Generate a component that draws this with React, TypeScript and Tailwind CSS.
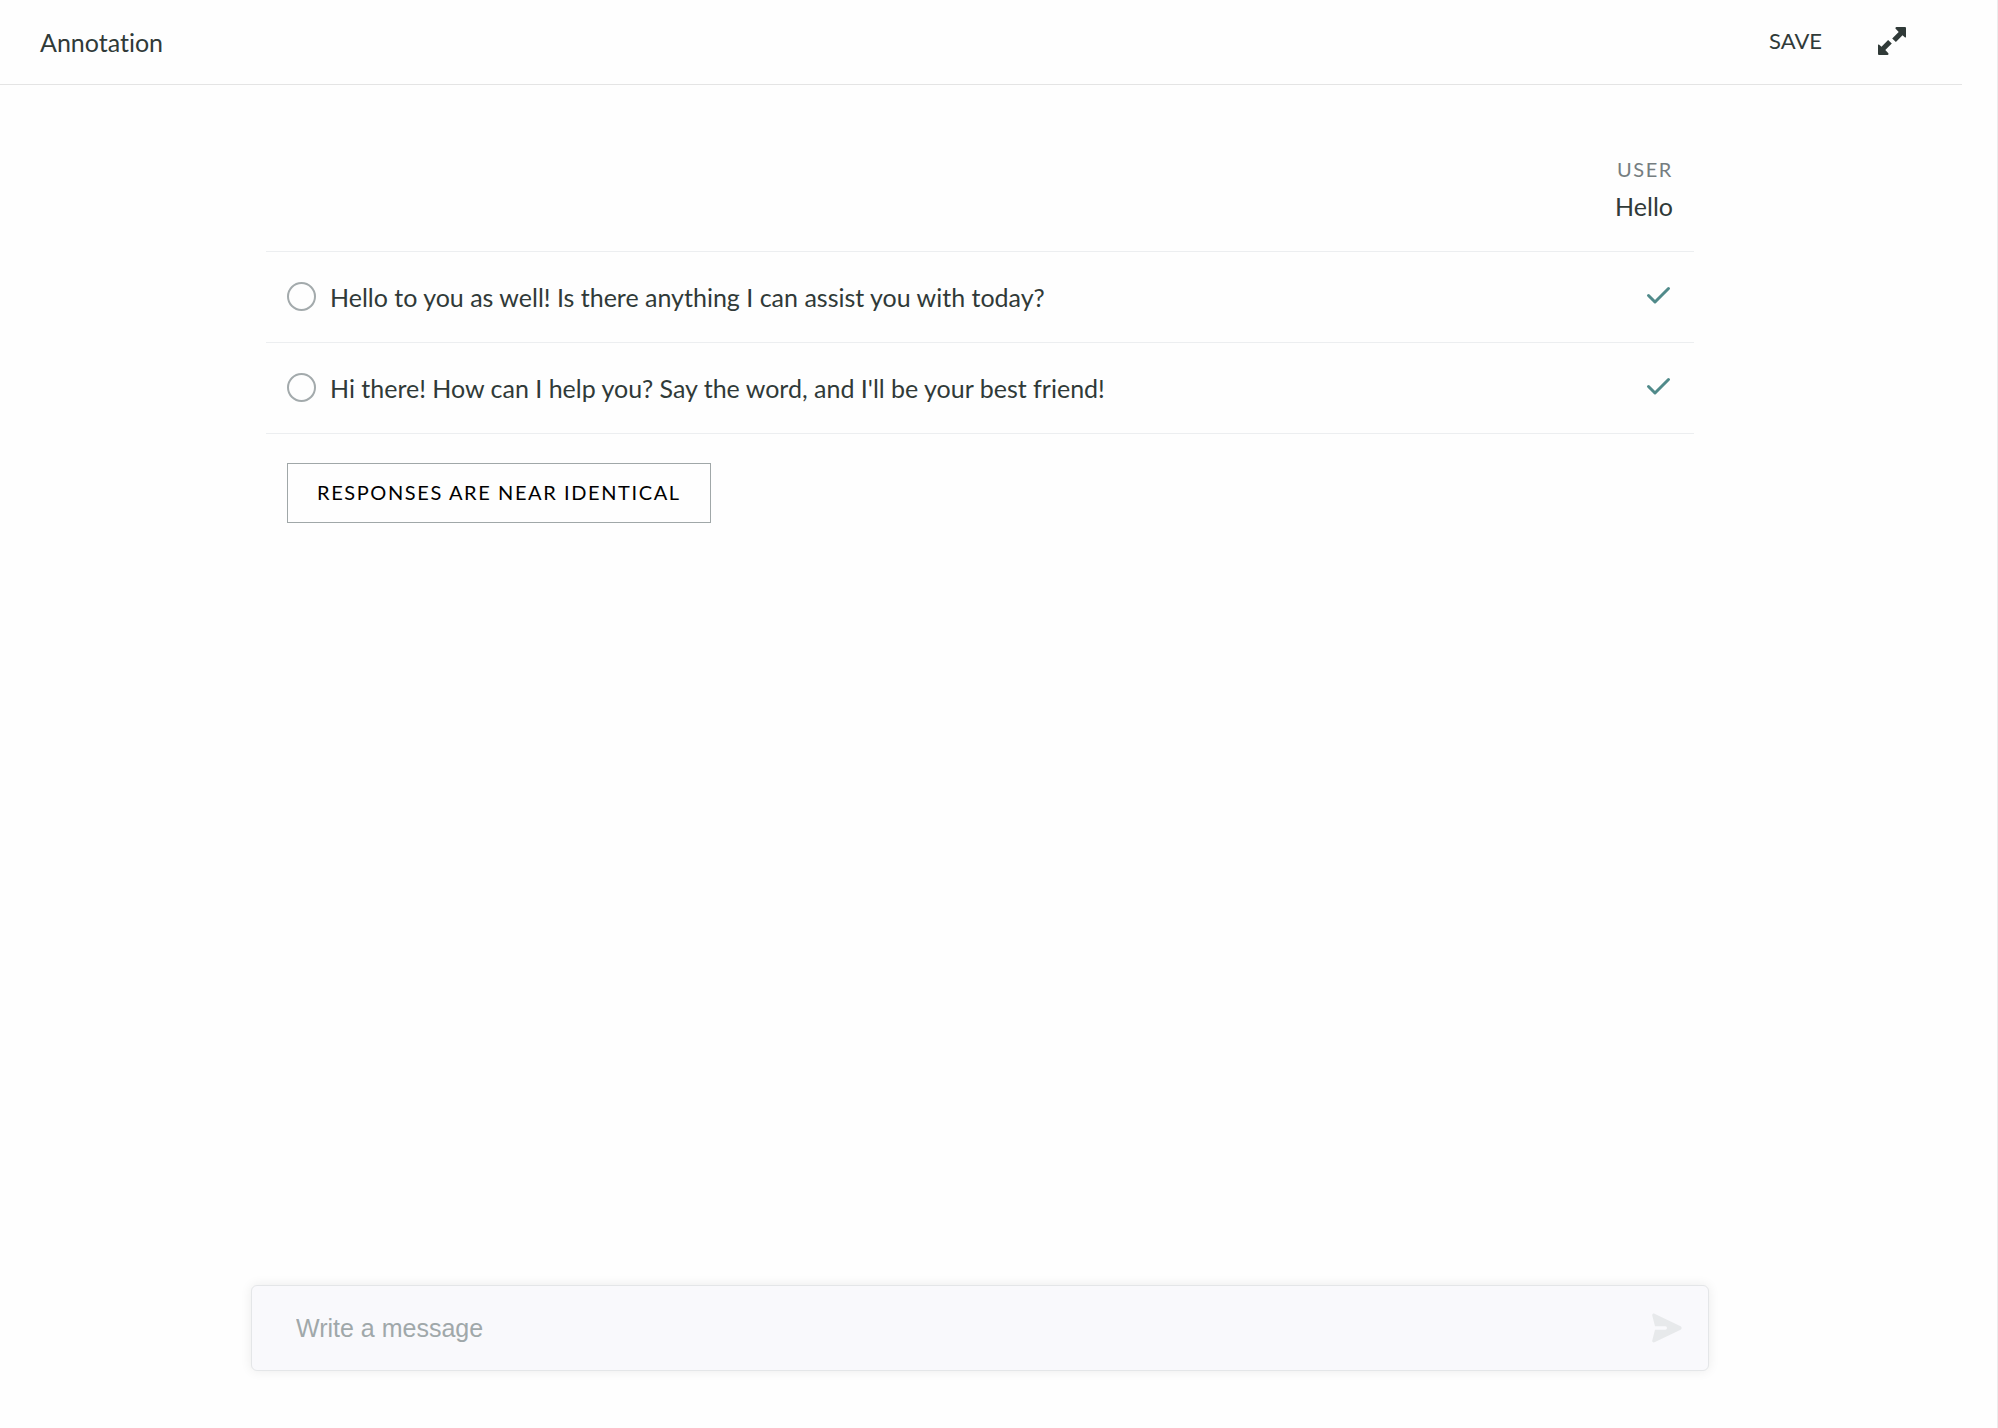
import React, { useState } from "react";

// ---------------------------------------------------------------------------
// Types
// ---------------------------------------------------------------------------

interface ResponseOption {
  id: string;
  text: string;
}

interface ResponseRowProps {
  option: ResponseOption;
  checked: boolean;
  onSelect: (id: string) => void;
}

const RESPONSES: ResponseOption[] = [
  {
    id: "response-a",
    text: "Hello to you as well! Is there anything I can assist you with today?",
  },
  {
    id: "response-b",
    text: "Hi there! How can I help you? Say the word, and I'll be your best friend!",
  },
];

// ---------------------------------------------------------------------------
// Icons
// ---------------------------------------------------------------------------

const ExpandIcon: React.FC = () => (
  <svg className="h-7 w-7" viewBox="0 0 28 28" fill="currentColor" aria-hidden="true">
    <path d="M18.500 0H27a1 1 0 0 1 1 1v8.800a.7.7 0 0 1-1.200.5L24.500 8.200l-6.600 6.700-3.700-3.500 6.500-6.400-2.800-2.900A1.200 1.200 0 0 1 18.500 0Z" />
    <path d="M9.500 28H1a1 1 0 0 1-1-1v-8.800a.7.7 0 0 1 1.200-.5L3.500 19.800l6.600-6.700 3.700 3.500-6.500 6.400 2.800 2.900A1.200 1.200 0 0 1 9.500 28Z" />
  </svg>
);

const CheckIcon: React.FC = () => (
  <svg
    className="h-7 w-7 shrink-0 text-[#508a8a]"
    viewBox="0 0 28 28"
    fill="none"
    stroke="currentColor"
    strokeWidth="3"
    strokeLinecap="round"
    strokeLinejoin="round"
    aria-label="Complete"
  >
    <path d="m3.500 12.500 6.500 6.500L23.500 5.500" />
  </svg>
);

const SendIcon: React.FC = () => (
  <svg className="h-[30px] w-[30px]" viewBox="0 0 30 30" fill="currentColor" aria-hidden="true">
    <path d="M2.500.7 28.600 13.300a1.900 1.900 0 0 1 0 3.400L2.500 29.300C1.100 29.900-.2 28.700.3 27.200L3 16.700h10.300a1.700 1.700 0 0 0 0-3.400H3L.3 2.800C-.2 1.300 1.100.1 2.500.7Z" />
  </svg>
);

// ---------------------------------------------------------------------------
// Components
// ---------------------------------------------------------------------------

const ResponseRow: React.FC<ResponseRowProps> = ({ option, checked, onSelect }) => (
  <li className="flex h-[91px] items-center justify-between border-b border-[#eceef0] px-[21px]">
    <div className="flex items-center gap-[14px]">
      <input
        type="radio"
        id={option.id}
        name="response"
        checked={checked}
        onChange={() => onSelect(option.id)}
        className="mb-0.5 h-[29px] w-[29px] shrink-0 appearance-none rounded-full border-2 border-[#a3aaac] checked:border-8 checked:border-[#508a8a]"
      />
      <label htmlFor={option.id}>{option.text}</label>
    </div>
    <CheckIcon />
  </li>
);

const App: React.FC = () => {
  const [selected, setSelected] = useState<string | null>(null);
  const [message, setMessage] = useState("");

  return (
    <div className="flex min-h-screen flex-col border-r border-[#ececec] bg-[#fefefe] pr-[35px] font-['Lato',sans-serif] text-[25px] leading-8 text-[#303a38] [font-variant-ligatures:none]">
      {/* ── Header ── */}
      <header className="flex h-[85px] items-center justify-between border-b border-[#e4e4e4] pr-14 pl-10">
        <h1>Annotation</h1>
        <div className="flex items-center gap-14 pb-0.5">
          <button type="button" className="text-[22px]">
            SAVE
          </button>
          <button type="button" aria-label="Expand">
            <ExpandIcon />
          </button>
        </div>
      </header>

      <main className="mx-auto flex w-full max-w-[1460px] flex-1 flex-col pr-0.5">
        <div className="flex-1 px-[15px] pt-[68px]">
          {/* ── User turn ── */}
          <section className="border-b border-[#eceef0] px-[21px] pb-[29px] text-right">
            <p className="text-[20px] tracking-[0.08em] text-[#757d80]">USER</p>
            <p className="pt-[5px]">Hello</p>
          </section>

          {/* ── Candidate responses ── */}
          <ul>
            {RESPONSES.map((option) => (
              <ResponseRow
                key={option.id}
                option={option}
                checked={selected === option.id}
                onSelect={setSelected}
              />
            ))}
          </ul>

          <button
            type="button"
            onClick={() => setSelected(null)}
            className="mx-[21px] mt-[29px] h-[60px] border border-[#a0a7a8] px-[29px] pb-0.5 text-[20px] tracking-[0.08em] text-black"
          >
            RESPONSES ARE NEAR IDENTICAL
          </button>
        </div>

        {/* ── Composer ── */}
        <form
          onSubmit={(e) => e.preventDefault()}
          className="mb-[57px] flex h-[86px] items-center rounded-md border border-[#e4e6e8] bg-[#f9f9fc] pr-[26px] pl-11 shadow-[0_0_12px_rgba(0,0,0,0.08)]"
        >
          <input
            type="text"
            aria-label="Message"
            placeholder="Write a message"
            value={message}
            onChange={(e) => setMessage(e.target.value)}
            className="min-w-0 flex-1 bg-transparent font-['Liberation_Sans',Arial,sans-serif] outline-none placeholder:text-[#a0a8aa]"
          />
          <button type="submit" aria-label="Send" className="text-[#e7e9eb]">
            <SendIcon />
          </button>
        </form>
      </main>
    </div>
  );
};

export default App;
